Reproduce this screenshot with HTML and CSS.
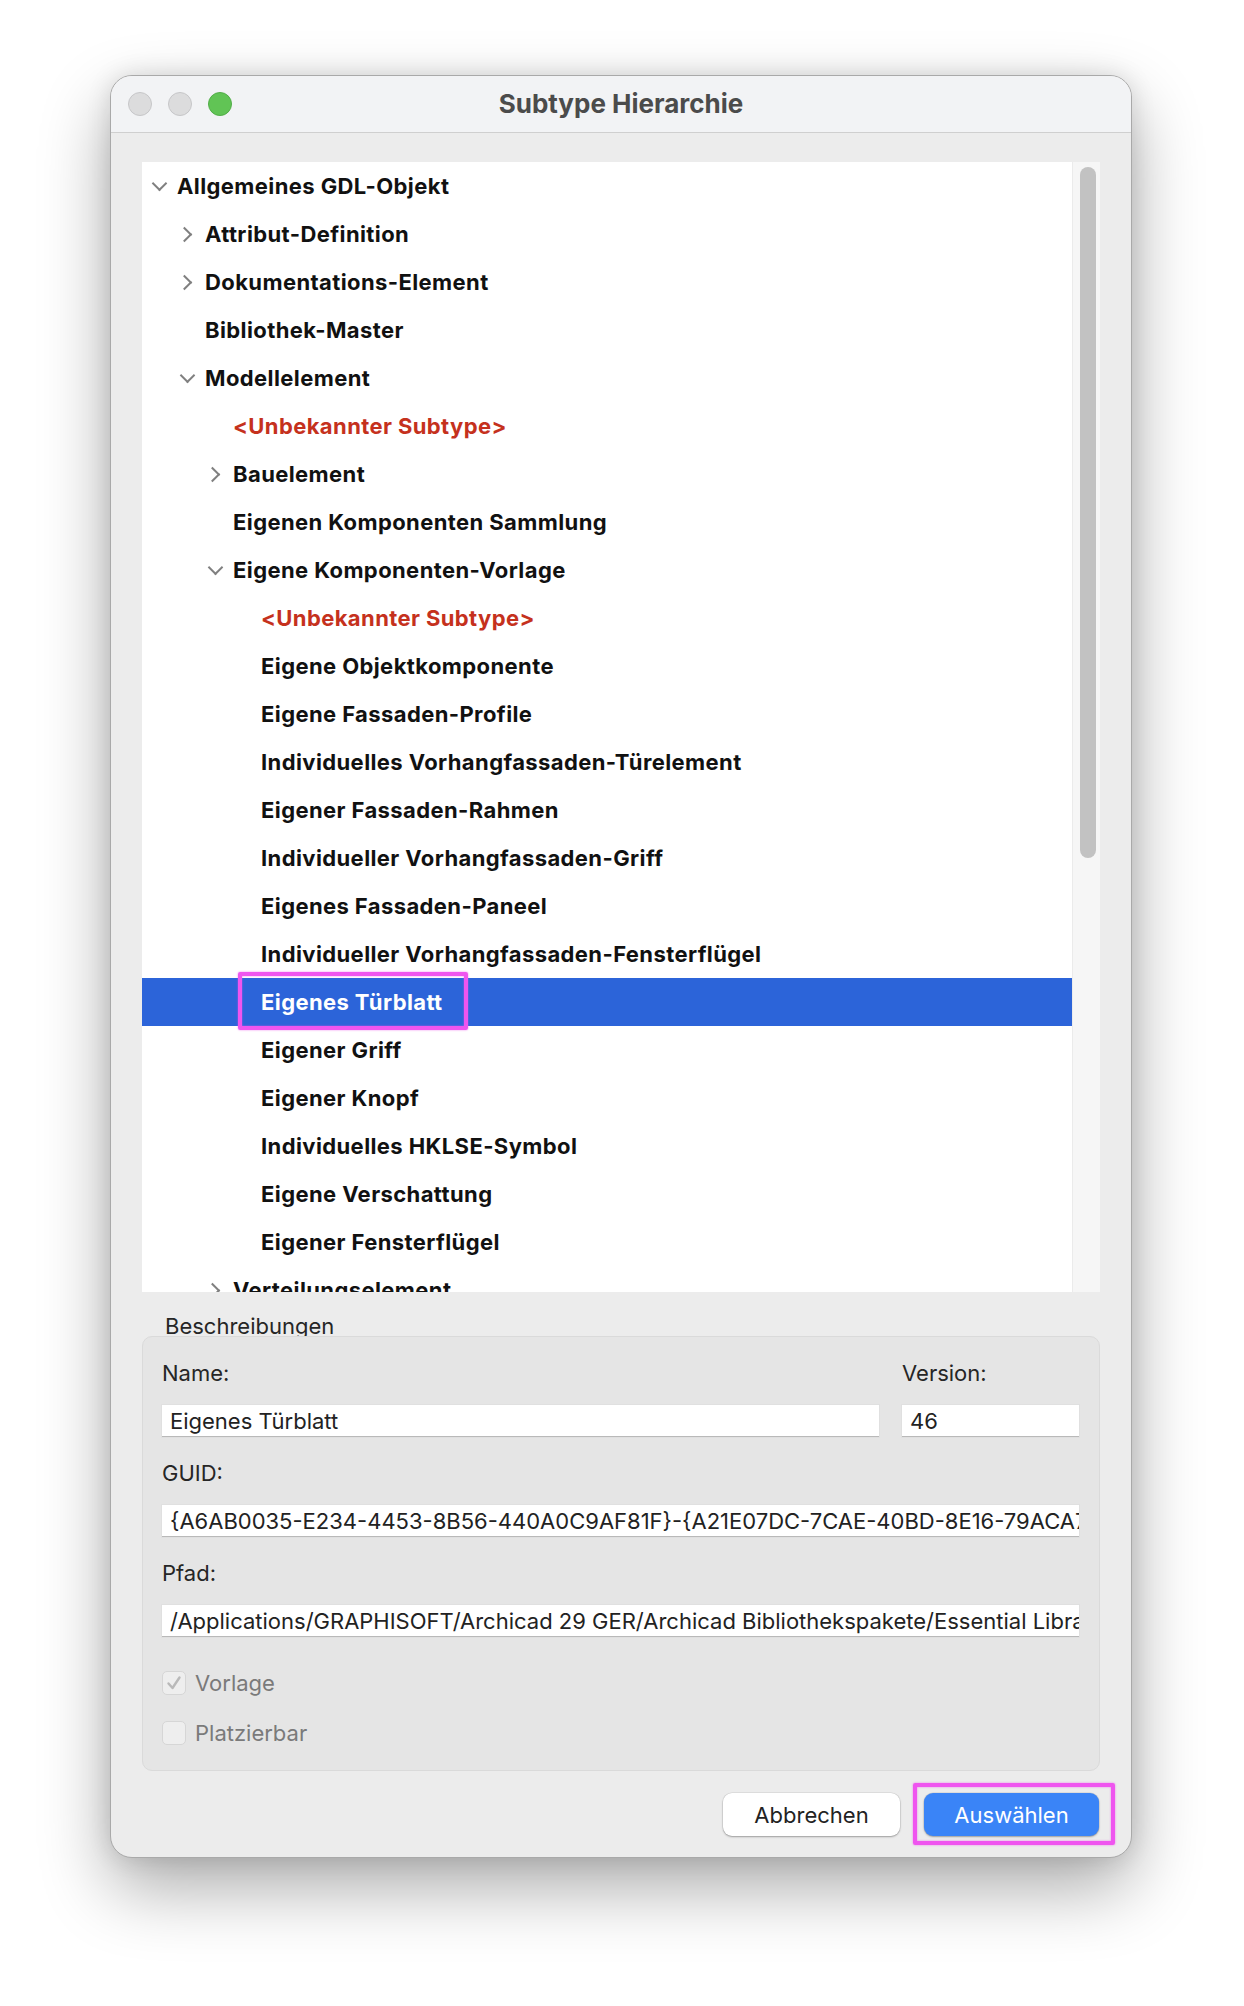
FILE: index.html
```html
<!DOCTYPE html>
<html lang="de">
<head>
  <meta charset="UTF-8">
  <title>Subtype Hierarchie</title>
  <link rel="stylesheet" href="styles.css">
</head>
<body>
  <div class="window">
    <div class="titlebar">
      <div class="lights">
        <span class="light"></span>
        <span class="light"></span>
        <span class="light green"></span>
      </div>
      <div class="title">Subtype Hierarchie</div>
    </div>

    <div class="content">
      <div class="tree-box">
        <div class="tree">
          <div class="row lv0"><span class="chev down"></span><span class="label">Allgemeines GDL-Objekt</span></div>
          <div class="row lv1"><span class="chev right"></span><span class="label">Attribut-Definition</span></div>
          <div class="row lv1"><span class="chev right"></span><span class="label">Dokumentations-Element</span></div>
          <div class="row lv1"><span class="chev"></span><span class="label">Bibliothek-Master</span></div>
          <div class="row lv1"><span class="chev down"></span><span class="label">Modellelement</span></div>
          <div class="row lv2 unknown"><span class="chev"></span><span class="label">&lt;Unbekannter Subtype&gt;</span></div>
          <div class="row lv2"><span class="chev right"></span><span class="label">Bauelement</span></div>
          <div class="row lv2"><span class="chev"></span><span class="label">Eigenen Komponenten Sammlung</span></div>
          <div class="row lv2"><span class="chev down"></span><span class="label">Eigene Komponenten-Vorlage</span></div>
          <div class="row lv3 unknown"><span class="chev"></span><span class="label">&lt;Unbekannter Subtype&gt;</span></div>
          <div class="row lv3"><span class="chev"></span><span class="label">Eigene Objektkomponente</span></div>
          <div class="row lv3"><span class="chev"></span><span class="label">Eigene Fassaden-Profile</span></div>
          <div class="row lv3"><span class="chev"></span><span class="label">Individuelles Vorhangfassaden-Türelement</span></div>
          <div class="row lv3"><span class="chev"></span><span class="label">Eigener Fassaden-Rahmen</span></div>
          <div class="row lv3"><span class="chev"></span><span class="label">Individueller Vorhangfassaden-Griff</span></div>
          <div class="row lv3"><span class="chev"></span><span class="label">Eigenes Fassaden-Paneel</span></div>
          <div class="row lv3"><span class="chev"></span><span class="label">Individueller Vorhangfassaden-Fensterflügel</span></div>
          <div class="row lv3 selected"><span class="chev"></span><span class="label">Eigenes Türblatt</span><span class="mark row-mark"></span></div>
          <div class="row lv3"><span class="chev"></span><span class="label">Eigener Griff</span></div>
          <div class="row lv3"><span class="chev"></span><span class="label">Eigener Knopf</span></div>
          <div class="row lv3"><span class="chev"></span><span class="label">Individuelles HKLSE-Symbol</span></div>
          <div class="row lv3"><span class="chev"></span><span class="label">Eigene Verschattung</span></div>
          <div class="row lv3"><span class="chev"></span><span class="label">Eigener Fensterflügel</span></div>
          <div class="row lv2"><span class="chev right"></span><span class="label">Verteilungselement</span></div>
        </div>
        <div class="scrollbar"><div class="thumb"></div></div>
      </div>

      <div class="group-title">Beschreibungen</div>
      <div class="group">
        <div class="name-row">
          <div class="field-col">
            <div class="field-label">Name:</div>
            <div class="field">Eigenes Türblatt</div>
          </div>
          <div class="field-col">
            <div class="field-label">Version:</div>
            <div class="field">46</div>
          </div>
        </div>
        <div class="field-label">GUID:</div>
        <div class="field">{A6AB0035-E234-4453-8B56-440A0C9AF81F}-{A21E07DC-7CAE-40BD-8E16-79ACA7D3E2B1}</div>
        <div class="field-label">Pfad:</div>
        <div class="field">/Applications/GRAPHISOFT/Archicad 29 GER/Archicad Bibliothekspakete/Essential Library 29/Objekte</div>

        <div class="checks">
          <div class="check">
            <span class="box">
              <svg width="18" height="18" viewBox="0 0 18 18"><path d="M3.5 9.5 L7.5 14 L14.5 3.5" fill="none" stroke="#b9b9b9" stroke-width="2.4" stroke-linecap="round" stroke-linejoin="round"/></svg>
            </span>
            <span>Vorlage</span>
          </div>
          <div class="check">
            <span class="box"></span>
            <span>Platzierbar</span>
          </div>
        </div>
      </div>

      <div class="buttons">
        <button class="btn">Abbrechen</button>
        <button class="btn primary">Auswählen<span class="mark btn-mark"></span></button>
      </div>
    </div>
  </div>
</body>
</html>
```

FILE: styles.css
```css
* { box-sizing: border-box; margin: 0; padding: 0; }

body {
  background: #ffffff;
  font-family: 'Inter', 'Helvetica Neue', sans-serif;
  padding: 75px 0 0 110px;
  height: 2006px;
  overflow: hidden;
}

.window {
  width: 1022px;
  height: 1783px;
  background: #ececec;
  border: 1px solid #a9a9a9;
  border-radius: 22px;
  overflow: hidden;
  box-shadow: 0 30px 70px rgba(0, 0, 0, 0.33), 0 0 24px rgba(0, 0, 0, 0.12);
  display: flex;
  flex-direction: column;
}

.titlebar {
  height: 57px;
  background: #f2f3f5;
  border-bottom: 1px solid #cfcfcf;
  display: flex;
  align-items: center;
  position: relative;
}
.lights {
  display: flex;
  gap: 16px;
  padding-left: 17px;
}
.light {
  width: 24px;
  height: 24px;
  border-radius: 50%;
  background: #dcdcdd;
  border: 1px solid #c6c6c8;
}
.light.green {
  background: #61c455;
  border-color: #52ad48;
}
.title {
  position: absolute;
  left: 0;
  right: 0;
  text-align: center;
  font-size: 26px;
  font-weight: 700;
  color: #4b4b4b;
  margin-top: -2px;
}

.content {
  padding: 29px 31px 0 31px;
  display: flex;
  flex-direction: column;
}

/* tree */
.tree-box {
  height: 1130px;
  display: flex;
  background: #fff;
  overflow: hidden;
}
.tree {
  flex: 1;
  overflow: hidden;
}
.row {
  height: 48px;
  display: flex;
  align-items: center;
  font-size: 22px;
  letter-spacing: 0.4px;
  font-weight: 700;
  color: #111;
  position: relative;
  white-space: nowrap;
}
.row.lv0 { padding-left: 7px; }
.row.lv1 { padding-left: 35px; }
.row.lv2 { padding-left: 63px; }
.row.lv3 { padding-left: 91px; }
.row.unknown { color: #c5311d; }
.row.selected {
  background: #2c64d9;
  color: #fff;
}

.chev {
  width: 20px;
  height: 20px;
  margin-right: 8px;
  position: relative;
  flex: none;
}
.chev.right::before,
.chev.down::before {
  content: '';
  position: absolute;
  width: 9px;
  height: 9px;
  border-right: 2.2px solid #808080;
  border-bottom: 2.2px solid #808080;
}
.chev.right::before {
  left: 2px;
  top: 5px;
  transform: rotate(-45deg);
}
.chev.down::before {
  left: 5px;
  top: 2px;
  transform: rotate(45deg);
}

.scrollbar {
  width: 28px;
  background: #f6f6f6;
  border-left: 1px solid #ebebeb;
  padding: 5px 0 0 7px;
}
.thumb {
  width: 16px;
  height: 691px;
  border-radius: 8px;
  background: #c2c2c2;
}

/* annotation marks */
.mark {
  position: absolute;
  border: 4px solid #ef55ef;
  border-radius: 2px;
  box-shadow: 0 0 2px rgba(239, 85, 239, 0.8), inset 0 0 2px rgba(239, 85, 239, 0.8);
  pointer-events: none;
}
.row-mark {
  left: 96px;
  top: -6px;
  width: 230px;
  height: 58px;
}
.btn-mark {
  left: -11px;
  top: -10px;
  right: -16px;
  bottom: -9px;
}

/* descriptions */
.group-title {
  font-size: 22px;
  color: #262626;
  line-height: 26px;
  margin: 21px 0 -3px 23px;
}
.group {
  background: #e5e5e5;
  border: 1px solid #dadada;
  border-radius: 10px;
  padding: 23px 20px 0 19px;
  height: 435px;
  font-size: 22px;
  color: #262626;
}
.name-row {
  display: grid;
  grid-template-columns: 717px 177px;
  column-gap: 23px;
}
.field-label {
  line-height: 26px;
  margin-bottom: 19px;
}
.field {
  height: 32px;
  background: #fff;
  border-bottom: 1px solid #b9b9b9;
  box-shadow: 0 0 0 1px #e0e0e0;
  padding: 0 8px;
  line-height: 32px;
  white-space: nowrap;
  overflow: hidden;
  color: #222;
  margin-bottom: 23px;
}
.checks {
  margin-top: 34px;
  display: flex;
  flex-direction: column;
  gap: 26px;
}
.check {
  display: flex;
  align-items: center;
  gap: 9px;
  color: #7a7a7a;
  height: 24px;
}
.box {
  width: 24px;
  height: 24px;
  border-radius: 5px;
  background: #eeeeee;
  border: 1px solid #d6d6d6;
  display: flex;
  align-items: center;
  justify-content: center;
}

.buttons {
  display: flex;
  justify-content: flex-end;
  gap: 24px;
  margin-top: 22px;
  padding-right: 1px;
}
.btn {
  width: 177px;
  height: 43px;
  border: none;
  border-radius: 9px;
  background: #fff;
  box-shadow: 0 1px 2px rgba(0, 0, 0, 0.3), 0 0 0 0.5px rgba(0, 0, 0, 0.1);
  font-family: 'Inter', 'Helvetica Neue', sans-serif;
  font-size: 22px;
  color: #222;
  position: relative;
}
.btn.primary {
  width: 175px;
  background: #3a84f7;
  color: #fff;
}
```
